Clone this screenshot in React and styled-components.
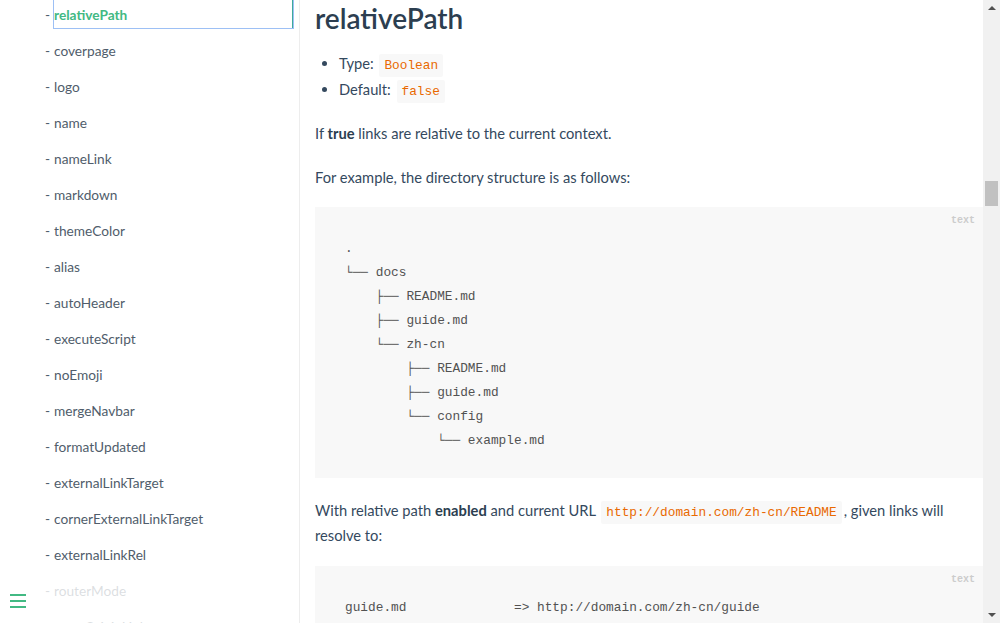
import React from "react";
import styled, { createGlobalStyle } from "styled-components";

const Global = createGlobalStyle`
  html, body { margin: 0; padding: 0; background: #fff; }
  body { font-family: "Lato", "Noto Sans", sans-serif; -webkit-font-smoothing: antialiased; }
  * { box-sizing: border-box; }
`;

const Page = styled.div`
  display: flex;
  width: 1000px;
  height: 623px;
  overflow: hidden;
  background: #fff;
`;

const Sidebar = styled.aside`
  position: relative;
  width: 300px;
  flex: none;
  border-right: 1px solid rgba(0, 0, 0, 0.07);
  overflow: hidden;
`;

const NavList = styled.ul`
  list-style: none;
  margin: -1px 0 0;
  padding: 0 0 0 45px;
  display: flex;
  flex-direction: column;
  gap: 6px;
`;

const NavItem = styled.li`
  display: flex;
  align-items: center;
  height: 30px;
  font-size: 13.7px;
  color: #505d6b;
  &::before {
    content: "-";
    width: 9px;
    flex: none;
  }
`;

const NavLink = styled.a`
  flex: 1;
  height: 30px;
  display: flex;
  align-items: center;
  margin-right: 5px;
  color: ${(p) => (p.$active ? "#42b983" : "#505d6b")};
  font-weight: ${(p) => (p.$active ? 700 : 400)};
  border: ${(p) => (p.$active ? "1px solid #9dc0f5" : "1px solid transparent")};
  box-shadow: ${(p) => (p.$active ? "inset -1px 0 0 #3fa99a" : "none")};
  margin-left: -1px;
  text-decoration: none;
`;

const ToggleBar = styled.div`
  position: absolute;
  left: 0;
  bottom: 0;
  width: 284px;
  height: 43px;
  padding: 14px 10px 0;
  background: rgba(255, 255, 255, 0.8);
`;

const Burger = styled.div`
  display: flex;
  flex-direction: column;
  gap: 4px;
  width: 16px;
  span {
    display: block;
    height: 2px;
    background: #42b983;
  }
`;

const Main = styled.main`
  flex: 1;
  min-width: 0;
  padding-left: 15px;
  overflow: hidden;
  color: #34495e;
  font-size: 14.7px;
`;

const Title = styled.h2`
  margin: 0;
  font-size: 28px;
  line-height: 36px;
  font-weight: 600;
  color: #2c3e50;
`;

const Bullets = styled.ul`
  margin: 14px 0 0;
  padding-left: 24px;
  li {
    height: 26px;
    line-height: 26px;
  }
`;

const Para = styled.p`
  margin: ${(p) => p.$mt || 18}px 0 0;
  line-height: 25px;
  strong { font-weight: 700; color: #2c3e50; }
`;

const Code = styled.code`
  font-family: "Liberation Mono", "DejaVu Sans Mono", monospace;
  font-size: 12.8px;
  line-height: 1;
  color: #e96900;
  background: #f8f8f8;
  border-radius: 2px;
  padding: 4px 5px;
  margin: 0 2px;
`;

const Pre = styled.pre`
  position: relative;
  margin: ${(p) => p.$mt}px 0 0;
  background: #f8f8f8;
  padding: 30px 30px 25px;
  font-family: "Liberation Mono", "DejaVu Sans Mono", monospace;
  font-size: 12.8px;
  line-height: 24px;
  color: #525252;
  overflow: hidden;
  &::after {
    content: "text";
    position: absolute;
    top: 7px;
    right: 8px;
    font-size: 10px;
    line-height: 14px;
    font-weight: 700;
    color: #ccc;
  }
`;

const Scrollbar = styled.div`
  width: 17px;
  flex: none;
  background: #f1f1f1;
  display: flex;
  flex-direction: column;
  align-items: center;
  justify-content: space-between;
  padding: 6px 0 6px;
`;

const Arrow = styled.div`
  width: 0;
  height: 0;
  border-left: 4px solid transparent;
  border-right: 4px solid transparent;
  ${(p) => (p.$down ? "border-top: 4px solid #505050;" : "border-bottom: 4px solid #505050;")}
`;

const Track = styled.div`
  flex: 1;
  width: 100%;
  padding: 0 2px;
  display: flex;
  flex-direction: column;
`;

const Thumb = styled.div`
  margin-top: 171px;
  height: 25px;
  background: #c1c1c1;
`;

const nav = [
  "relativePath",
  "coverpage",
  "logo",
  "name",
  "nameLink",
  "markdown",
  "themeColor",
  "alias",
  "autoHeader",
  "executeScript",
  "noEmoji",
  "mergeNavbar",
  "formatUpdated",
  "externalLinkTarget",
  "cornerExternalLinkTarget",
  "externalLinkRel",
  "routerMode",
  "crossOriginLinks",
];

const tree = `.
└── docs
    ├── README.md
    ├── guide.md
    └── zh-cn
        ├── README.md
        ├── guide.md
        └── config
            └── example.md`;

export default function App() {
  return (
    <Page>
      <Global />
      <Sidebar>
        <NavList>
          {nav.map((n, i) => (
            <NavItem key={n}>
              <NavLink $active={i === 0}>{n}</NavLink>
            </NavItem>
          ))}
        </NavList>
        <ToggleBar>
          <Burger>
            <span />
            <span />
            <span />
          </Burger>
        </ToggleBar>
      </Sidebar>
      <Main>
        <Title>relativePath</Title>
        <Bullets>
          <li>
            Type: <Code>Boolean</Code>
          </li>
          <li>
            Default: <Code>false</Code>
          </li>
        </Bullets>
        <Para $mt={19}>
          If <strong>true</strong> links are relative to the current context.
        </Para>
        <Para $mt={19}>For example, the directory structure is as follows:</Para>
        <Pre $mt={17}>{tree}</Pre>
        <Para $mt={20}>
          With relative path <strong>enabled</strong> and current URL{" "}
          <Code>http://domain.com/zh-cn/README</Code>, given links will resolve to:
        </Para>
        <Pre $mt={18}>{`guide.md              => http://domain.com/zh-cn/guide
../README.md          => http://domain.com/README`}</Pre>
      </Main>
      <Scrollbar>
        <Arrow />
        <Track>
          <Thumb />
        </Track>
        <Arrow $down />
      </Scrollbar>
    </Page>
  );
}
